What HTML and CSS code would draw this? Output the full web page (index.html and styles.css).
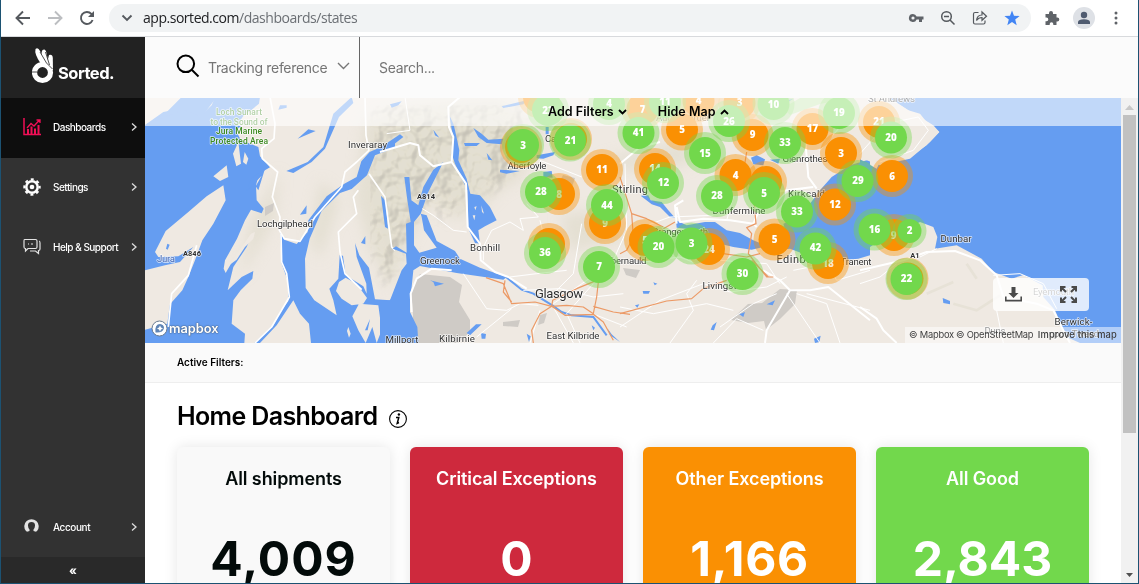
FILE: index.html
```html
<!DOCTYPE html>
<html lang="en">
<head>
<meta charset="utf-8">
<title>Home Dashboard</title>
<link rel="stylesheet" href="styles.css">
</head>
<body>
<div class="window">
  <header class="toolbar">
    <div class="nav-icons">
      <svg width="16" height="16" viewBox="0 0 16 16" class="line dark"><path d="M15 8H2M8 1.500L1.500 8L8 14.500"/></svg>
      <svg width="16" height="16" viewBox="0 0 16 16" class="line pale"><path d="M1 8H14M8 1.500L14.500 8L8 14.500"/></svg>
      <svg width="16" height="16" viewBox="0 0 16 16" class="line dark"><path d="M13.600 10A6 6 0 1 1 12.400 3.900L14 5.600"/><path class="solid" d="M15 1V7H9Z"/></svg>
    </div>
    <div class="address">
      <svg width="12" height="8" viewBox="0 0 12 8" class="line dark"><path d="M1.500 1.500L6 6L10.500 1.500"/></svg>
      <span class="url">app.sorted.com<span>/dashboards/states</span></span>
      <div class="address-icons">
        <svg width="16" height="16" viewBox="0 0 16 16"><path fill="#5f6368" fill-rule="evenodd" d="M5 4A4 4 0 1 0 8.600 9.500H11V12H14V9.500H15.500V6.500H8.600A4 4 0 0 0 5 4ZM5 6.400A1.600 1.600 0 1 1 5 9.600A1.600 1.600 0 1 1 5 6.400Z"/></svg>
        <svg width="16" height="16" viewBox="0 0 16 16" class="line dark thin"><circle cx="6.500" cy="6.500" r="4.800"/><path d="M4 6.500H9M10 10L14.500 14.500"/></svg>
        <svg width="16" height="16" viewBox="0 0 16 16" class="line dark thin"><path stroke-width="1.200" d="M6.500 2.500H3Q1.500 2.500 1.500 4V12.500Q1.500 14 3 14H11.500Q13 14 13 12.500V10.500M4.500 10.500Q5 5 10 5V2L14.500 6.200L10 10.300V7.500Q6.500 7.500 4.500 10.500Z"/></svg>
        <svg width="16" height="16" viewBox="0 0 16 16"><path fill="#4285f4" d="M8 .5L10 5.700L15.600 6L11.200 9.600L12.700 15.200L8 12L3.300 15.200L4.800 9.600L.4 6L6 5.700Z"/></svg>
      </div>
    </div>
    <div class="browser-icons">
      <svg width="16" height="16" viewBox="0 0 16 16"><path fill="#5f6368" d="M1.500 4H5V3A2 2 0 0 1 9 3V4H12.500V7.500H13.300A2 2 0 0 1 13.300 11.500H12.500V15H9.300V14A1.800 1.800 0 0 0 5.700 14V15H1.500V11.200H2.500A1.800 1.800 0 0 0 2.500 7.600H1.500Z"/></svg>
      <svg width="22" height="22" viewBox="0 0 22 22"><circle cx="11" cy="11" r="11" fill="#dee1e6"/><circle cx="11" cy="8" r="3.200" fill="#4f5b70"/><path fill="#4f5b70" d="M5 17V15Q5.500 12.300 11 12.300T17 15V17Z"/></svg>
      <svg width="4" height="14" viewBox="0 0 4 14" fill="#5f6368"><circle cx="2" cy="2" r="1.500"/><circle cx="2" cy="7" r="1.500"/><circle cx="2" cy="12" r="1.500"/></svg>
    </div>
  </header>

  <div class="app">
    <aside class="sidebar">
      <div class="brand">
        <svg width="22" height="37" viewBox="0 0 22 37"><g fill="#fff"><path d="M3.500 2Q6 0 8 4L14 16L9 17Q2 7 3.500 2Z"/><path d="M10.500 3Q13.500 1 14.500 6L17 18L12 15Q8 6 10.500 3Z"/><path d="M17 8Q20.500 7 20.800 11L21 24L15 16Z"/></g><circle cx="10.500" cy="25.500" r="8" fill="none" stroke="#fff" stroke-width="5.200"/><path d="M8 5L14.500 16L20.500 22M13.500 5L17.500 18M0 25H5" stroke="#222" stroke-width=".8" fill="none"/></svg>
        <span>Sorted.</span>
      </div>
      <nav class="menu">
        <a class="item active">
          <svg width="18" height="18" viewBox="0 0 18 18" fill="none" stroke="#f00f56"><path d="M1 0V16.500H18" stroke-width="1.500"/><path d="M4 10L8 5.500L11 8L16.500 2M13.500 2H17V5" stroke-width="1.300"/><path d="M5 11V16M8.500 8.500V16M12 10.500V16M15.500 7V16" stroke-width="2"/></svg>
          <span>Dashboards</span><svg class="chev" width="6" height="8" viewBox="0 0 6 8"><path d="M1 .5L5 4L1 7.500"/></svg></a>
        <a class="item">
          <svg width="18" height="18" viewBox="0 0 18 18"><g stroke="#fff" fill="none"><circle cx="9" cy="9" r="5.700" stroke-width="2.500"/><circle cx="9" cy="9" r="7.700" stroke-width="2" stroke-dasharray="3 3.048" stroke-dashoffset="1.500"/></g><circle cx="9" cy="9" r="2.300" fill="#fff"/></svg>
          <span>Settings</span><svg class="chev" width="6" height="8" viewBox="0 0 6 8"><path d="M1 .5L5 4L1 7.500"/></svg></a>
        <a class="item">
          <svg width="18" height="18" viewBox="0 0 18 18" fill="none" stroke="#e3e3e3" stroke-width="1.200"><path d="M1.500 1.500H12.500Q14 1.500 14 3V9Q14 10.500 12.500 10.500H5L2.500 13V10.500Q1 10.500 1 9V3Q1 1.500 1.500 1.500ZM16 3Q17 3 17 5V11Q17 12.500 15.500 12.500V15.500L12.500 13H7M5 6H6M8 6H10"/></svg>
          <span>Help &amp; Support</span><svg class="chev" width="6" height="8" viewBox="0 0 6 8"><path d="M1 .5L5 4L1 7.500"/></svg></a>
      </nav>
      <a class="item account">
        <svg width="18" height="18" viewBox="0 0 18 18"><path fill="#e3e3e3" d="M4 13.800L2.800 12.800A7.200 7.200 0 1 1 14.200 12.800L13 13.800L10.500 13V11.500Q12.200 9.500 12 7Q11.800 4 8.500 4T5 7Q4.800 9.500 6.500 11.500V13Z"/></svg>
        <span>Account</span><svg class="chev" width="6" height="8" viewBox="0 0 6 8"><path d="M1 .5L5 4L1 7.500"/></svg></a>
      <div class="collapse">«</div>
    </aside>

    <main class="main">
      <div class="search">
        <div class="search-type">
          <svg width="24" height="24" viewBox="0 0 24 24" fill="none" stroke="#000" stroke-width="2"><circle cx="9.800" cy="9.800" r="8.300"/><path d="M16 16L22.500 22.500"/></svg>
          <span>Tracking reference</span>
          <svg width="13" height="8" viewBox="0 0 13 8" fill="none" stroke="#777" stroke-width="1.400"><path d="M1 1L6.500 6.500L12 1"/></svg>
        </div>
        <span class="search-input">Search...</span>
      </div>

      <div class="scroll-area">
        <div class="content">
          <section class="map">
            <svg class="map-canvas" width="976" height="245" viewBox="145 98 976 245">
              <defs>
                <filter id="relief" x="0" y="0" width="100%" height="100%" color-interpolation-filters="sRGB">
                  <feTurbulence type="fractalNoise" baseFrequency=".05" numOctaves="3" seed="8"/>
                  <feDiffuseLighting surfaceScale="11" diffuseConstant="1.250" lighting-color="#f6f4df" result="lit"><feDistantLight azimuth="215" elevation="55"/></feDiffuseLighting>
                  <feGaussianBlur in="SourceGraphic" stdDeviation="6" result="edge"/>
                  <feComposite in="lit" in2="edge" operator="in"/>
                </filter>
                <filter id="soft"><feGaussianBlur stdDeviation="7"/></filter>
                <g id="good"><circle r="21" opacity=".4"/><circle r="16"/></g>
                <g id="late"><circle r="21" opacity=".4"/><circle r="16"/></g>
              </defs>
              <rect class="land" x="145" y="98" width="976" height="245"/>
              <!-- hills -->
              <g fill="#d9d6c3" filter="url(#soft)" opacity=".5"><path d="M365 120L410 105L500 98L545 130L520 180L500 190L480 210L455 220L430 200L410 240L390 290L370 250L355 200Z"/><path d="M150 280L190 270L165 320L145 325ZM250 225L280 170L275 220L240 280ZM320 180L340 200L320 260L310 240ZM600 160L690 140L690 165L620 170ZM560 215L600 210L630 240L570 250Z"/></g>
              <path d="M372 105H530L515 175L495 190L470 195L450 220L420 210L390 290L370 250Z" filter="url(#relief)" opacity=".13" class="shade"/>
              <path d="M145 280L190 260L175 330L145 325ZM170 225L220 195L190 240L160 255Z" filter="url(#relief)" opacity=".1" class="shade"/>
              <!-- parks and moorland -->
              <g fill="#cfcbc6"><path d="M420 274L450 277L462 285L459 302L470 320L470 332L458 343H413V315L411 289Z"/><path d="M731 320L748 304L762 303L780 289L797 290L795 304L780 319L766 330L764 321L748 323ZM623 268L640 270L636 278L626 275ZM503 322L520 320L518 327L503 326ZM540 315L547 313L544 323L538 325ZM563 175L575 178L572 187L560 181ZM265 207L274 203L273 211L265 216Z"/></g>
              <path d="M697 98H790V120L740 124L700 110Z" fill="#e8e2d9"/>
              <path d="M783 108L800 98H850L820 104L790 115Z" fill="#bbe5a3" opacity=".8"/>

              <!-- west coast -->
              <g transform="translate(145 97) scale(.33333)">
                <path class="water" d="M0 84L55 45L105 35L120 10L140 35L165 58L200 25L210 0H345L342 20L300 55L310 72L272 100L288 130L340 150L345 178L375 211L342 230L333 265L335 310L356 335L350 349L318 338L300 370L276 425L240 490L236 515L242 528L258 500L290 455L318 420L305 450L265 510L248 580L290 540L325 522L322 545L287 580L265 610L260 680L300 710L298 738H0Z"/>
                <path class="water" d="M328 738L385 685L408 640L430 612L428 550L410 500L406 405L418 428L455 441L488 405L490 370L545 298L598 260L635 240L649 193L674 165L750 131V152L690 175L666 235L620 276L585 288L530 342L494 425L480 485L482 573L508 610L575 655L565 610L553 575L580 545L584 475L594 476L602 535L655 568L665 590L664 560L635 480L630 438L643 475L672 512L690 607L735 610L750 590V738Z"/>
                <path class="land" d="M235 265L242 310L205 380L172 430L150 490L130 540L112 580L75 622L67 680L0 698V520L60 505L105 495L145 450L100 478L40 480L30 465L62 402L130 345L185 298ZM245 205L250 240L225 252L205 238ZM280 135L288 200L274 208L264 170ZM299 165L310 185L304 203L294 195ZM300 50L350 25L345 100L275 85ZM318 410L330 405L325 425L300 450L275 488L252 505Z"/>
                <path class="land" d="M602 542L635 560L666 603L655 620L620 625L590 605L573 582L582 555ZM642 620L700 625L710 700L695 738L682 690L662 738L640 700L622 658ZM610 690L617 710L612 722L606 702ZM345 738L395 685L445 610L465 650L492 680L498 738Z"/>
                <path class="water" d="M0 84L60 50L110 0H215L170 60L115 38ZM424 222L488 195L535 150L565 50L620 0L625 18L582 60L540 155L500 195L445 228ZM458 125L490 97L512 102L475 118ZM708 296L722 312L729 395L720 390ZM465 353L485 325L484 350ZM661 417V442L648 438ZM67 440L74 443L68 458L63 455ZM360 215L340 280L332 268L350 236L303 285L318 245ZM405 25H425V32L400 38ZM660 700L675 666L668 700Z"/>
                <g class="road"><path d="M375 0L390 80L387 125L350 155L352 185L398 225L382 300L405 360L403 400L418 425L465 433L510 360L590 270L600 225L635 195L672 160L663 115L660 0" stroke-width="5"/><path d="M408 410L410 495L425 530L433 600L380 690L330 738M640 280L625 300L635 350L580 405L585 465L600 530L650 578M155 445L130 535L80 590L70 690M672 230L720 300L740 450L750 460" stroke-width="5"/></g>
              </g>

              <!-- Clyde and Loch Lomond -->
              <g transform="translate(380 97) scale(.33333)">
                <path class="water" d="M0 612L30 610L65 520L80 500L78 470L38 455L48 448L80 467L78 380L92 375L80 295L73 240L88 240L94 310L115 325L130 270L160 218L190 195L145 285L122 350L102 375L102 445L118 467L170 452L132 400L125 360L122 350L140 355L170 432L225 462L240 485L300 512L380 540L370 548L230 528L120 507L100 520L95 570L90 600L90 645L112 690L115 738H0Z"/>
                <path class="water" d="M208 55L220 80L225 100L238 160L235 190L260 245L271 290L300 295L330 330L350 370L315 388L295 400L300 440L285 438L265 395L262 280L225 200L215 170L220 125ZM280 93L305 110L325 128L370 125L365 142L320 138L295 120ZM252 138H300L290 147H255ZM320 168L337 190L325 188ZM0 152L60 112L70 120L35 147L0 168ZM160 98L178 122L165 115ZM470 175L525 165L520 175L490 185L470 184ZM360 218L420 222L380 230L360 226ZM497 90H506V112H497ZM490 225L515 222L518 242L490 240ZM365 28L440 10L430 22L370 33ZM30 22L65 13L55 25L35 32ZM150 550L192 560L165 568L160 555ZM288 682H305L270 715L260 708ZM303 708L318 711L316 725H305ZM440 710L452 718L447 735ZM635 685L645 692L640 700ZM683 695L695 712L720 735L690 715Z"/>
                <path d="M378 540L425 578L460 590L517 625L545 645L575 655L640 660L680 715" fill="none" stroke="#659df1" stroke-width="6"/>
                <path class="land" d="M283 330L290 328L286 340ZM304 325L312 350L306 345ZM278 355H286L283 370Z"/>
                <g class="road"><path d="M240 0L205 30L207 90L220 120L215 195L258 260L263 390L300 440L302 490L345 525L385 540L440 575M95 645L92 590L110 545L155 515L215 520M0 165L90 138L115 145L120 175L160 208L215 195" stroke-width="6"/><path d="M127 335L160 355L220 400L260 405M480 190L605 240M440 320L475 360L420 365L430 400L390 375L335 400L310 450L310 490M480 370L490 410M605 380L580 530L520 590M250 530L320 635L380 640L420 620L475 625M395 635L290 720M480 640L450 738M390 540L470 530L560 520M520 620L620 550L700 490L740 400L735 200M520 630L580 738M650 655L740 690M640 560L560 650L600 738M430 580L540 575L640 600L730 590M20 110L90 100L75 0" stroke-width="3"/></g>
                <g class="motorway"><path d="M318 542L370 560L395 620L465 615L515 628L555 655L640 652L670 675L700 730M515 628L518 610L590 575L650 550M515 628L480 650L455 700L460 738M375 550L370 585L395 615M655 555L650 600L640 650L610 630L560 625L515 628M640 628L700 645L750 652"/></g>
              </g>

              <!-- Forth -->
              <g transform="translate(620 97) scale(.33333)">
                <path class="water" d="M62 296L85 295L92 310L125 315L145 340L165 362L150 360L120 330L95 322ZM168 370L200 385L255 375L285 375L320 400L360 408L400 430L425 440L470 435L500 415L490 380L540 360L570 320L600 280L635 240L690 205L750 187V738H750V475L715 485L680 488L635 465L600 462L550 470L510 455L470 460L430 450L395 458L340 450L300 440L280 425L240 400L170 392ZM393 182L410 175L435 187L430 205L400 202ZM450 188L480 185L475 200ZM68 582L90 582L86 590H70ZM100 556L112 560L104 565ZM45 625L58 622L52 632ZM278 685L290 675L282 700L272 698ZM582 725L602 716L598 735L585 738ZM440 622L465 610L458 625ZM358 652L375 645L370 660ZM470 40L495 12L520 5L480 30Z"/>
                <g class="road"><path d="M0 200L60 150L120 135M170 330L180 375L250 365L330 370L400 380L410 390M430 520L480 550L510 580L570 580L625 570L750 670M510 580L440 700L435 738M400 380L440 290L500 280L580 270M170 380L165 325L190 310M550 60L565 240L590 275" stroke-width="6"/><path d="M0 690L120 610L250 560L330 585L440 570L500 540M150 738L220 640L200 590L230 550M0 630L100 650L260 620L340 640M280 738L350 665L430 700M530 590L620 620L660 738M500 590L600 738M470 590L400 620L300 690M560 590L750 640M40 400L150 360L280 355M520 520L620 500L650 550L750 520M30 500L180 480L230 500M230 410L300 490L440 500L480 560M100 40L180 70M340 300L320 370M660 0L660 90L600 160M600 190L700 150" stroke-width="3"/></g>
                <g class="motorway"><path d="M0 240L35 350L80 365L130 390M35 350L40 420L20 460L0 470M130 395L165 375M380 165L372 215L400 290L408 380L380 392L395 410L385 470L440 540L460 540M0 650L140 612L215 605L250 575L320 550M220 405L310 470L380 480L420 470M395 490L445 540"/></g>
              </g>

              <!-- North Sea coast -->
              <g transform="translate(860 97) scale(.33333)">
                <path class="water" d="M0 0H783V738H660L620 720L585 640L550 600L548 565L490 534L455 545L400 525L365 485L290 445L225 455L232 420L220 390L180 375L140 395L100 410L60 430L30 450L15 475L0 480V187L50 215L60 195L150 180L200 145L238 105L220 85L180 60L145 40L100 10Z"/>
                <path class="land" d="M0 0H80L100 12L145 40L180 50L200 75L238 105L210 135L150 185L60 205L20 190L0 186Z"/>
                <path class="water" d="M248 603L270 612V622L250 618Z"/>
                <g class="road"><path d="M0 520L130 490L200 465L285 462L360 490L410 535L430 600L530 620L580 640L610 700L630 738M0 630L50 665L70 700L110 738" stroke-width="6"/><path d="M0 170L80 80L175 60L205 100L160 160L60 195M0 560L60 540L110 500M180 480L230 455M410 640L430 738M400 535L480 530L550 560L590 635" stroke-width="3"/></g>
                <path d="M200 590L280 555M280 620L350 640L420 595M320 500L350 545" stroke="#e7e2d7" stroke-width="8" fill="none"/>
              </g>

              <g class="labels">
                <g class="reserve"><text x="239" y="115" textLength="46">Loch Sunart</text><text x="239" y="124.500" textLength="57">to the Sound of</text><text x="239" y="134" textLength="46">Jura Marine</text><text x="239" y="143.500" textLength="58">Protected Area</text></g>
                <text x="367.500" y="148" textLength="39">Inveraray</text><text x="285" y="227" textLength="56">Lochgilphead</text>
                <text x="166" y="262" textLength="18" class="sea">Jura</text>
                <text x="192" y="256" class="route" textLength="18">A846</text><text x="426" y="199" class="route" textLength="18">A814</text><text x="915" y="258" class="route">A1</text>
                <text x="527" y="169" textLength="39">Aberfoyle</text><text x="564" y="142" textLength="38">Callander</text>
                <text x="485" y="251" textLength="30">Bonhill</text><text x="440" y="264" textLength="40">Greenock</text>
                <text x="402" y="343" textLength="33">Millport</text><text x="457" y="342" textLength="36">Kilbirnie</text>
                <text x="573" y="339" textLength="53">East Kilbride</text><text x="559" y="298" class="city" textLength="48">Glasgow</text>
                <text x="630" y="192.500" class="town" textLength="36">Stirling</text><text x="619" y="264" textLength="55">Cumbernauld</text>
                <text x="680" y="235" textLength="56">Grangemouth</text><text x="683" y="121" textLength="54">Auchterarder</text>
                <text x="739" y="213.500" textLength="53">Dunfermline</text><text x="805" y="162" textLength="45">Glenrothes</text>
                <text x="809" y="197" textLength="42">Kirkcaldy</text><text x="803" y="262.500" class="town" textLength="53">Edinburgh</text>
                <text x="725" y="289" textLength="45">Livingston</text><text x="856" y="265" textLength="31">Tranent</text>
                <text x="891.500" y="102" textLength="47">St Andrews</text><text x="956" y="242" textLength="31">Dunbar</text>
                <text x="1053.500" y="295" textLength="41">Eyemouth</text><text x="995" y="334" textLength="21">Duns</text>
                <text x="1073.500" y="325" textLength="38">Berwick-</text><text x="1074" y="337" textLength="50">upon-Tweed</text>
              </g>

              <g class="late">
                <use href="#late" x="539" y="97"/><use href="#late" x="521" y="147"/><use href="#late" x="571" y="139"/><use href="#late" x="549" y="244"/><use href="#late" x="766" y="182"/><use href="#late" x="907.500" y="278.500"/>
                <use href="#late" x="642.500" y="109"/><use href="#late" x="698.500" y="101"/><use href="#late" x="739.500" y="103"/>
                <use href="#late" x="602" y="170"/><use href="#late" x="559" y="194"/><use href="#late" x="605" y="223"/><use href="#late" x="682" y="129.500"/><use href="#late" x="752.500" y="135"/><use href="#late" x="812.500" y="129"/><use href="#late" x="841" y="153"/><use href="#late" x="655" y="169"/><use href="#late" x="735.500" y="175"/><use href="#late" x="835" y="204.500"/><use href="#late" x="645" y="240"/><use href="#late" x="709" y="249"/><use href="#late" x="774.500" y="239.500"/><use href="#late" x="828" y="263"/><use href="#late" x="879" y="122"/><use href="#late" x="892" y="176"/><use href="#late" x="894" y="235"/>
              </g>
              <g class="count"><text x="642.500" y="113">7</text><text x="698.500" y="104">4</text><text x="739.500" y="106">3</text><text x="602" y="173">11</text><text x="559" y="198" opacity=".7">8</text><text x="605" y="227" opacity=".7">9</text><text x="682" y="133">5</text><text x="752.500" y="138">9</text><text x="812.500" y="132">17</text><text x="841" y="156.500">3</text><text x="655" y="172">14</text><text x="735.500" y="178.500">4</text><text x="835" y="208">12</text><text x="645" y="244">5</text><text x="709" y="253" opacity=".8">24</text><text x="774.500" y="243">5</text><text x="828" y="267" opacity=".8">18</text><text x="879" y="125">21</text><text x="892" y="179.500">6</text><text x="893.500" y="239" opacity=".7">9</text></g>
              <g class="good">
                <use href="#good" x="548" y="110"/><use href="#good" x="609" y="104"/><use href="#good" x="665" y="102"/><use href="#good" x="773.500" y="104"/><use href="#good" x="839" y="113"/><use href="#good" x="729" y="121"/><use href="#good" x="523" y="145"/><use href="#good" x="570" y="140.500"/><use href="#good" x="541" y="192"/><use href="#good" x="607" y="205"/><use href="#good" x="545" y="253"/><use href="#good" x="599" y="267"/><use href="#good" x="638.500" y="133"/><use href="#good" x="705" y="153"/><use href="#good" x="785" y="143"/><use href="#good" x="663" y="183"/><use href="#good" x="717" y="196"/><use href="#good" x="764" y="193"/><use href="#good" x="797" y="211.500"/><use href="#good" x="857.500" y="181"/><use href="#good" x="658.500" y="247"/><use href="#good" x="691.500" y="243.500"/><use href="#good" x="815.500" y="248.500"/><use href="#good" x="742.500" y="274"/><use href="#good" x="891" y="137.500"/><use href="#good" x="874.500" y="229.500"/><use href="#good" x="906.500" y="279"/>
                <circle cx="909.500" cy="231" r="17" opacity=".4"/><circle cx="909.500" cy="231" r="12"/>
              </g>
              <g class="count"><text x="548" y="114">22</text><text x="609" y="107">4</text><text x="665" y="105">11</text><text x="773.500" y="107.500">10</text><text x="839" y="116">19</text><text x="729" y="125">26</text><text x="523" y="149">3</text><text x="570.500" y="144">21</text><text x="541" y="195">28</text><text x="607" y="208.500">44</text><text x="545" y="256">36</text><text x="599" y="270">7</text><text x="638.500" y="136">41</text><text x="705" y="156.500">15</text><text x="785" y="146">33</text><text x="663.500" y="186">12</text><text x="717" y="199">28</text><text x="764" y="197">5</text><text x="797" y="215">33</text><text x="858" y="184">29</text><text x="658.500" y="250">20</text><text x="691.500" y="246.500">3</text><text x="815.500" y="251">42</text><text x="742.500" y="277">30</text><text x="891" y="140.500">20</text><text x="874.500" y="232.500">16</text><text x="909.500" y="234">2</text><text x="906.500" y="282">22</text></g>
            </svg>
            <div class="map-bar">
              <span>Add Filters <svg width="9" height="6" viewBox="0 0 9 6"><path d="M1 1L4.500 4.500L8 1"/></svg></span>
              <span>Hide Map <svg width="9" height="6" viewBox="0 0 9 6"><path d="M1 5L4.500 1.500L8 5"/></svg></span>
            </div>
            <div class="map-logo"><svg width="17" height="17" viewBox="0 0 17 17"><circle cx="8.500" cy="8.500" r="7.500" fill="#fff" stroke="#687a90"/><path d="M4.500 12.500Q3.500 4 9 4Q13 4.500 13 8Q12 13 4.500 12.500Z" fill="#5f84b4"/><path d="M9 5.500L10 7.500L12 8.500L10 9.500L9 11.500L8 9.500L6 8.500L8 7.500Z" fill="#fff"/></svg><span>mapbox</span></div>
            <div class="map-tools">
              <svg width="17" height="15" viewBox="0 0 17 15" fill="#4a4a4a"><path d="M6.500 0H10.500V6H13.500L8.500 11L3.500 6H6.500Z"/><path d="M0 9.500H1.600V12.800H15.400V9.500H17V14.500H0Z"/></svg>
              <svg width="17" height="17" viewBox="0 0 17 17" fill="none" stroke="#4a4a4a" stroke-width="2"><path d="M1 5.500V1H5.500M11.500 1H16V5.500M16 11.500V16H11.500M5.500 16H1V11.500M1.500 1.500L6 6M15.500 1.500L11 6M15.500 15.500L11 11M1.500 15.500L6 11"/></svg>
            </div>
            <div class="attribution"><span>© Mapbox</span><span>© OpenStreetMap</span><b>Improve this map</b></div>
          </section>
          <div class="active-filters">Active Filters:</div>
          <section class="dashboard">
            <h1>Home Dashboard <svg width="18" height="18" viewBox="0 0 18 18"><circle cx="9" cy="9" r="8.400" fill="none" stroke="#000" stroke-width="1.100"/><path d="M7 7.500H9.800L8.200 13.300L10 12.500" fill="none" stroke="#000" stroke-width="1.500"/><circle cx="9.900" cy="4.500" r="1.200"/></svg></h1>
            <div class="cards">
              <article class="card all"><h2>All shipments</h2><strong>4,009</strong></article>
              <article class="card critical"><h2>Critical Exceptions</h2><strong>0</strong></article>
              <article class="card other"><h2>Other Exceptions</h2><strong>1,166</strong></article>
              <article class="card fine"><h2>All Good</h2><strong>2,843</strong></article>
            </div>
          </section>
        </div>
        <div class="scrollbar">
          <svg width="9" height="5" viewBox="0 0 9 5"><path d="M0 5L4.500 0L9 5Z" fill="#c8c8c8"/></svg>
          <div class="thumb"></div>
          <svg class="down" width="7" height="4" viewBox="0 0 7 4"><path d="M0 0H7L3.500 4Z" fill="#505050"/></svg>
        </div>
      </div>
    </main>
  </div>
</div>
</body>
</html>
```
FILE: styles.css
```css
* { box-sizing: border-box; }
body { margin: 0; font-family: Inter, "Liberation Sans", sans-serif; }
svg { display: block; flex: none; }

.window { width: 1139px; height: 584px; overflow: hidden; display: flex; flex-direction: column; border: 1px solid #1c5272; border-top: 0; background: #fff; }

.toolbar { height: 37px; flex: none; display: flex; align-items: center; border-bottom: 1px solid #d8dadd; }
.nav-icons { display: flex; gap: 16px; padding: 0 0 1px 14px; width: 108px; }
.line { fill: none; stroke-width: 1.9; }
.line.dark { stroke: #55595e; }
.line.pale { stroke: #bcbec1; }
.line.thin { stroke-width: 1.5; }
.solid { fill: #55595e; stroke: none; }
.address { width: 922px; height: 28px; border-radius: 14px; background: #f1f3f4; display: flex; align-items: center; padding: 0 11px 1px 12px; gap: 10px; }
.url { font: 14px "Open Sans", sans-serif; color: #202124; flex: 1; letter-spacing: -.47px; }
.url span { color: #6b6f74; }
.address-icons { display: flex; gap: 16px; }
.browser-icons { display: flex; align-items: center; padding: 0 0 1px 13px; gap: 13px; }
.browser-icons svg:last-child { margin-left: 6px; }

.app { flex: 1; min-height: 0; display: flex; }
.sidebar { width: 144px; flex: none; background: #323232; display: flex; flex-direction: column; }
.brand { height: 61px; background: #222; display: flex; color: #fff; padding: 10px 0 0 31px; gap: 4px; font: bold 16.5px Inter, sans-serif; letter-spacing: -.5px; }
.brand span { padding-top: 16px; }
.menu { flex: 1; }
.item { height: 60px; display: flex; align-items: center; padding: 0 8px 2px 22px; color: #fff; font-size: 10px; font-weight: 500; letter-spacing: -.5px; }
.item span { flex: 1; padding-left: 12px; }
.item.active { background: #0e0e0e; }
.item.account { padding-bottom: 1px; letter-spacing: -.4px; }
.chev path { fill: none; stroke: #ddd; stroke-width: 1.3; }
.collapse { height: 26px; background: #292929; color: #fff; text-align: center; font: bold 12px/27px Inter, sans-serif; }

.main { flex: 1; display: flex; flex-direction: column; min-width: 0; }
.search { height: 61px; flex: none; background: #fbfbfb; display: flex; align-items: center; font-size: 14px; color: #757575; }
.search-type { width: 215px; height: 61px; border-right: 1px solid #666; display: flex; align-items: center; padding: 0 0 3px 31px; gap: 8px; }
.search-type span { width: 121px; letter-spacing: -.32px; white-space: nowrap; padding-top: 2px; }
.search-input { padding: 0 0 1px 19px; letter-spacing: -.3px; }
.scroll-area { flex: 1; display: flex; min-height: 0; }
.content { width: 976px; overflow: hidden; }
.scrollbar { width: 17px; background: #f1f1f1; display: flex; flex-direction: column; align-items: center; padding: 7px 0 6px; }
.thumb { width: 13px; height: 318px; margin-top: 5px; background: #c1c1c1; }
.scrollbar .down { margin-top: auto; }

.map { position: relative; height: 245px; overflow: hidden; }
.shade { mix-blend-mode: multiply; }
.land { fill: #efe9e2; }
.water { fill: #659df1; }
.road { fill: none; stroke: #fff; stroke-linejoin: round; }
.motorway { fill: none; stroke: #ec9a66; stroke-width: 3.6; stroke-linejoin: round; }
.labels { font: 9.7px Roboto, sans-serif; text-anchor: middle; fill: #303030; stroke: #fff; stroke-width: 1.5px; stroke-opacity: .75; paint-order: stroke; stroke-linejoin: round; }
.labels .reserve { fill: #3d8a22; font-weight: 500; font-size: 8.5px; }
.labels .sea { fill: #4367b2; }
.labels .route { font-size: 7.5px; font-weight: bold; }
.labels .city { font-size: 13px; }
.labels .town { font-size: 11px; }
.good { fill: #72d84c; }
.late { fill: #fa9003; }
.count { fill: #fff; font: 800 9.8px "Open Sans", sans-serif; text-anchor: middle; }
.map-bar { position: absolute; inset: 0 0 auto; height: 28px; background: rgba(255,255,255,.6); display: flex; align-items: center; padding: 0 0 1px 403px; gap: 31px; font-weight: 600; font-size: 12.500px; letter-spacing: .05px; }
.map-bar span { display: flex; align-items: center; gap: 4px; }
.map-bar path { fill: none; stroke: #000; stroke-width: 1.8; }
.map-logo { position: absolute; left: 6px; bottom: 6px; display: flex; align-items: center; gap: 1px; color: #fff; font: 600 12.800px Inter, sans-serif; text-shadow: 0 0 1px #4a6485, 0 0 1px #4a6485, 0 0 2px #4a6485; }
.map-tools { position: absolute; left: 848px; top: 180px; width: 96px; height: 33px; border-radius: 4px; background: rgba(255,255,255,.8); display: flex; align-items: center; justify-content: space-between; padding: 0 12px; }
.attribution { position: absolute; right: 0; bottom: 0; height: 16px; width: 216px; background: rgba(255,255,255,.5); display: flex; align-items: center; gap: 2px; padding: 0 4px 1px; font: 9.300px Inter, sans-serif; color: #404040; white-space: nowrap; letter-spacing: -.2px; }
.attribution b { font-weight: 500; margin-left: auto; letter-spacing: .18px; }
.active-filters { height: 40px; background: #fafafa; border-bottom: 1px solid #eee; padding: 13px 32px; font-size: 10px; font-weight: 600; }
.dashboard { padding: 18px 32px 0; }
.dashboard h1 { margin: 0; height: 46px; font-size: 25px; font-weight: 600; line-height: 30px; letter-spacing: -.64px; display: flex; gap: 12px; }
.dashboard h1 svg { margin-top: 9px; }
.cards { display: grid; grid-template-columns: repeat(4, 213px); gap: 20px; }
.card { height: 190px; border-radius: 6px; box-shadow: 0 0 14px rgba(0,0,0,.1); color: #fff; text-align: center; padding-top: 20px; }
.card h2 { margin: 0; font-size: 18px; line-height: 24px; font-weight: 600; letter-spacing: -.1px; }
.card strong { display: block; margin-top: 39px; font-size: 48px; line-height: 58px; font-weight: 700; }
.all strong { letter-spacing: 1px; }
.all { background: #f9f9f9; color: #030b0a; }
.critical { background: #ce293d; }
.other { background: #fa9003; }
.other strong { letter-spacing: .6px; }
.fine { background: #72d84c; }
```
